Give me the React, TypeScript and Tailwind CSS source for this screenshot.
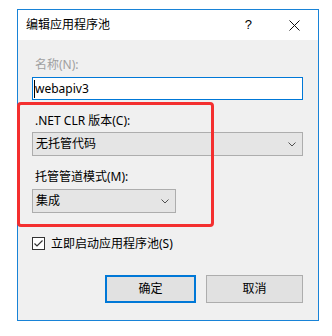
import React from "react";

const font = { fontFamily: '"Noto Sans", "Noto Sans CJK SC", sans-serif' };

function Chevron() {
  return (
    <svg width="8" height="5" viewBox="0 0 8 5" className="block">
      <polyline points="0.5,0.5 4,4 7.5,0.5" fill="none" stroke="#505050" strokeWidth="1" />
    </svg>
  );
}

export default function App() {
  return (
    <div className="relative w-[332px] h-[336px] bg-white text-[12px] text-black" style={font}>
      <div className="pt-[9px] pl-[17px]">
        <div className="w-[302px] h-[312px] border border-[#1883d7] flex flex-col bg-[#f0f0f0]">
          {/* title bar */}
          <div className="h-[30px] bg-white flex items-center pl-[8px] shrink-0">
            <span className="leading-[16px] flex-1">编辑应用程序池</span>
            <span className="text-[13px] leading-[16px] mr-[37px]" style={{ fontFamily: '"Liberation Sans", sans-serif' }}>?</span>
            <svg width="11" height="11" viewBox="0 0 11 11" className="mr-[18px]">
              <path d="M0.5 0.5 L10.5 10.5 M10.5 0.5 L0.5 10.5" stroke="#111" strokeWidth="1" />
            </svg>
          </div>
          {/* content */}
          <div className="flex flex-col pl-[14px]">
            <div className="mt-[17px] pl-[3px] leading-[16px] text-[#a0a0a0]">名称(N):</div>
            <div className="mt-[4px] w-[271px] h-[23px] border border-[#0078d7] bg-white flex items-center pl-[2px] relative">
              <span className="absolute left-[1px] top-[2px] w-[1px] h-[18px] bg-black" />
              <span className="leading-[16px]">webapiv3</span>
            </div>
            <div className="mt-[13px] pl-[3px] leading-[16px]">.NET CLR 版本(C):</div>
            <div className="mt-[3px] w-[271px] h-[24px] border border-[#adadad] bg-[#e5e5e5] flex items-center justify-between pl-[3px] pr-[6px]">
              <span className="leading-[16px]">无托管代码</span>
              <Chevron />
            </div>
            <div className="mt-[13px] pl-[3px] leading-[16px]">托管管道模式(M):</div>
            <div className="mt-[4px] w-[144px] h-[24px] border border-[#adadad] bg-[#e5e5e5] flex items-center justify-between pl-[3px] pr-[6px]">
              <span className="leading-[16px]">集成</span>
              <Chevron />
            </div>
            <div className="mt-[24px] flex items-center h-[13px]">
              <svg width="13" height="13" viewBox="0 0 13 13" className="block">
                <rect x="0.5" y="0.5" width="12" height="12" fill="white" stroke="#333" />
                <polyline points="2.5,6.5 5,9 10.5,3.5" fill="none" stroke="#333" strokeWidth="1.2" />
              </svg>
              <span className="ml-[6px] leading-[16px]">立即启动应用程序池(S)</span>
            </div>
            <div className="mt-[25px] flex pl-[73px] gap-[10px]">
              <button className="w-[91px] h-[28px] border-2 border-[#0078d7] bg-[#e1e1e1] flex items-center justify-center leading-[16px]">确定</button>
              <button className="w-[97px] h-[28px] border border-[#adadad] bg-[#e1e1e1] flex items-center justify-center leading-[16px]">取消</button>
            </div>
          </div>
        </div>
      </div>
      {/* red annotation box */}
      <div className="absolute left-[17px] top-[102px] w-[197px] h-[125px] border-[3px] border-[#f42f2f] rounded-[4px]" />
    </div>
  );
}
